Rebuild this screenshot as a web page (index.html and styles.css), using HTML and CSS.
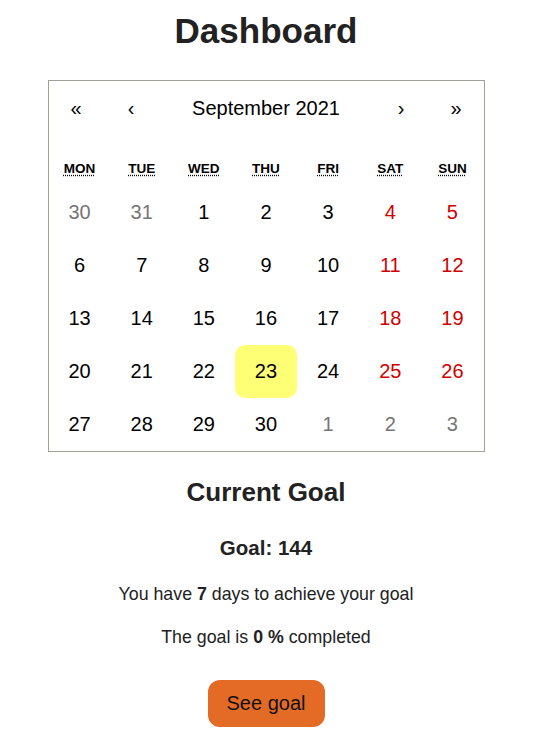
FILE: index.html
```html
<!DOCTYPE html>
<html>
<head>
<meta charset="utf-8">
<link rel="stylesheet" href="styles.css">
</head>
<body>
<div class="app">
  <h1 class="title">Dashboard</h1>
  <div class="calendar">
    <div class="nav">
      <button class="nav-btn">«</button>
      <button class="nav-btn">‹</button>
      <span class="nav-label">September 2021</span>
      <button class="nav-btn">›</button>
      <button class="nav-btn">»</button>
    </div>
    <div class="weekdays">
      <div class="wd"><abbr>MON</abbr></div>
      <div class="wd"><abbr>TUE</abbr></div>
      <div class="wd"><abbr>WED</abbr></div>
      <div class="wd"><abbr>THU</abbr></div>
      <div class="wd"><abbr>FRI</abbr></div>
      <div class="wd"><abbr>SAT</abbr></div>
      <div class="wd"><abbr>SUN</abbr></div>
    </div>
    <div class="days">
      <div class="tile other">30</div><div class="tile other">31</div><div class="tile">1</div><div class="tile">2</div><div class="tile">3</div><div class="tile weekend">4</div><div class="tile weekend">5</div>
      <div class="tile">6</div><div class="tile">7</div><div class="tile">8</div><div class="tile">9</div><div class="tile">10</div><div class="tile weekend">11</div><div class="tile weekend">12</div>
      <div class="tile">13</div><div class="tile">14</div><div class="tile">15</div><div class="tile">16</div><div class="tile">17</div><div class="tile weekend">18</div><div class="tile weekend">19</div>
      <div class="tile">20</div><div class="tile">21</div><div class="tile">22</div><div class="tile now">23</div><div class="tile">24</div><div class="tile weekend">25</div><div class="tile weekend">26</div>
      <div class="tile">27</div><div class="tile">28</div><div class="tile">29</div><div class="tile">30</div><div class="tile other">1</div><div class="tile other">2</div><div class="tile other">3</div>
    </div>
  </div>
  <h2 class="goal-title">Current Goal</h2>
  <h3 class="goal-value">Goal: 144</h3>
  <p class="line line-days">You have <b>7</b> days to achieve your goal</p>
  <p class="line line-pct">The goal is <b>0 %</b> completed</p>
  <button class="see-goal">See goal</button>
</div>
</body>
</html>
```

FILE: styles.css
```css
html, body {
  margin: 0;
  padding: 0;
  background: #ffffff;
}
body {
  font-family: "Liberation Sans", Arial, sans-serif;
  color: #222222;
  font-size: 17.5px;
}
.app {
  width: 532px;
  display: flex;
  flex-direction: column;
  align-items: center;
  text-align: center;
}
.title {
  font-size: 35px;
  line-height: 40px;
  font-weight: bold;
  margin: 11px 0 29px;
}
.calendar {
  width: 435px;
  border: 1px solid #a0a096;
  background: #fff;
  color: #000;
  font-size: 20px;
}
.nav {
  display: flex;
  height: 54px;
  margin-bottom: 16px;
  align-items: stretch;
}
.nav-btn {
  width: 55px;
  border: 0;
  background: none;
  font: inherit;
  font-size: 20px;
  color: #000;
  padding: 0;
}
.nav-label {
  flex: 1;
  display: flex;
  align-items: center;
  justify-content: center;
}
.weekdays {
  display: grid;
  grid-template-columns: repeat(7, 1fr);
  height: 35px;
  align-items: center;
}
.wd {
  font-size: 13.5px;
  font-weight: bold;
  text-align: center;
}
.wd abbr {
  text-decoration: underline dotted;
  text-underline-offset: 2px;
}
.days {
  display: grid;
  grid-template-columns: repeat(7, 1fr);
  grid-auto-rows: 53px;
}
.tile {
  display: flex;
  align-items: center;
  justify-content: center;
  color: #000;
}
.tile.weekend {
  color: #d10000;
}
.tile.other {
  color: #757575;
}
.tile.now {
  background: #ffff76;
  border-radius: 10px;
}
.goal-title {
  font-size: 26px;
  line-height: 30px;
  font-weight: bold;
  margin: 25px 0 0;
}
.goal-value {
  font-size: 20.5px;
  line-height: 24px;
  font-weight: bold;
  margin: 29px 0 0;
}
.line {
  font-size: 17.8px;
  line-height: 20px;
  margin: 0;
}
.line-days {
  margin-top: 24px;
}
.line-pct {
  margin-top: 23px;
}
.see-goal {
  margin-top: 33px;
  width: 117px;
  height: 47px;
  border: 0;
  border-radius: 12px;
  background: #e36b26;
  color: #111;
  font-family: "Liberation Sans", Arial, sans-serif;
  font-size: 20px;
  padding: 0;
}
```
